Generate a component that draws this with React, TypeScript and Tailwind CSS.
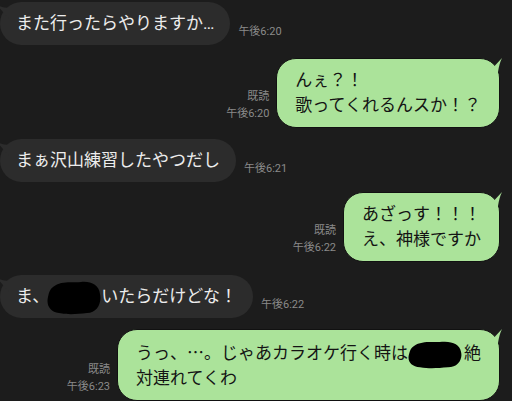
import React from 'react';

const jp = { fontFamily: 'Roboto, "Noto Sans CJK JP", "Noto Sans", sans-serif' };
const cjk = { fontFamily: '"Noto Sans CJK JP", sans-serif' };

const Redact: React.FC<{ w: number; h: number; cls?: string }> = ({ w, h, cls }) => (
  <svg width={w} height={h} viewBox="0 0 54 34" preserveAspectRatio="none" className={`inline-block align-middle ${cls ?? ''}`}>
    <path
      d="M6 6 C14 -1 26 2 34 1 C44 0 52 4 53 13 C55 22 50 32 40 32 C30 33 22 34 12 32 C3 31 -1 24 1 16 C2 11 3 8 6 6 Z"
      fill="#000"
    />
  </svg>
);

const GrayTail = () => (
  <svg className="absolute left-[-3px] top-[3px]" width="12" height="14" viewBox="0 0 12 14">
    <path d="M12 14 L0 0 C4 2 8 3 12 3 Z" fill="#2c2c2c" />
  </svg>
);

const GreenTail = () => (
  <svg className="absolute right-[-4px] top-[-1px]" width="14" height="14" viewBox="0 0 14 14">
    <path d="M0 14 L13 0 C11 4 10 8 9 14 Z" fill="#abe39a" />
  </svg>
);

const Time: React.FC<{ read?: boolean; t: string }> = ({ read, t }) => (
  <div className="flex flex-col items-end text-[11px] leading-[17px] text-[#8a8a8a]" style={jp}>
    {read && <span>既読</span>}
    <span>{t}</span>
  </div>
);

const Gray: React.FC<{ children: React.ReactNode; t: string; mt: string }> = ({ children, t, mt }) => (
  <div className={`flex items-end ${mt}`}>
    <div className="relative bg-[#2c2c2c] rounded-[22px] pl-[16px] pr-[16px] py-[9px] text-[17px] leading-[25px] text-[#ececec] whitespace-nowrap">
      <GrayTail />
      <span className="relative">{children}</span>
    </div>
    <div className="ml-[8px] mb-[5px]">
      <Time t={t} />
    </div>
  </div>
);

const Green: React.FC<{ children: React.ReactNode; t: string; mt: string }> = ({ children, t, mt }) => (
  <div className={`flex items-end justify-end pr-[12px] ${mt}`}>
    <div className="mr-[7px] mb-[6px]">
      <Time read t={t} />
    </div>
    <div className="relative bg-[#abe39a] border border-[#111] rounded-[20px] pl-[18px] pr-[18px] py-[9px] text-[17px] leading-[25px] text-[#141414] whitespace-nowrap">
      <GreenTail />
      <span className="relative">{children}</span>
    </div>
  </div>
);

export default function App() {
  return (
    <div className="w-[512px] h-[401px] overflow-hidden bg-[#1c1c1c] pt-[2px]" style={jp}>
      <Gray t="午後6:20" mt="mt-0">また行ったらやりますか…</Gray>
      <Green t="午後6:20" mt="mt-[13px]">
        んぇ？！
        <br />
        歌ってくれるんスか！？
      </Green>
      <Gray t="午後6:21" mt="mt-[11px]">まぁ沢山練習したやつだし</Gray>
      <Green t="午後6:22" mt="mt-[10px]">
        あざっす！！！
        <br />
        え、神様ですか
      </Green>
      <Gray t="午後6:22" mt="mt-[13px]">
        ま、
        <Redact w={54} h={34} cls="-my-[6px] -ml-[2px]" />
        いたらだけどな！
      </Gray>
      <Green t="午後6:23" mt="mt-[11px]">
        うっ、<span style={cjk}>…</span>。じゃあカラオケ行く時は
        <Redact w={54} h={28} cls="-my-[4px] mr-[2px]" />
        絶
        <br />
        対連れてくわ
      </Green>
    </div>
  );
}
